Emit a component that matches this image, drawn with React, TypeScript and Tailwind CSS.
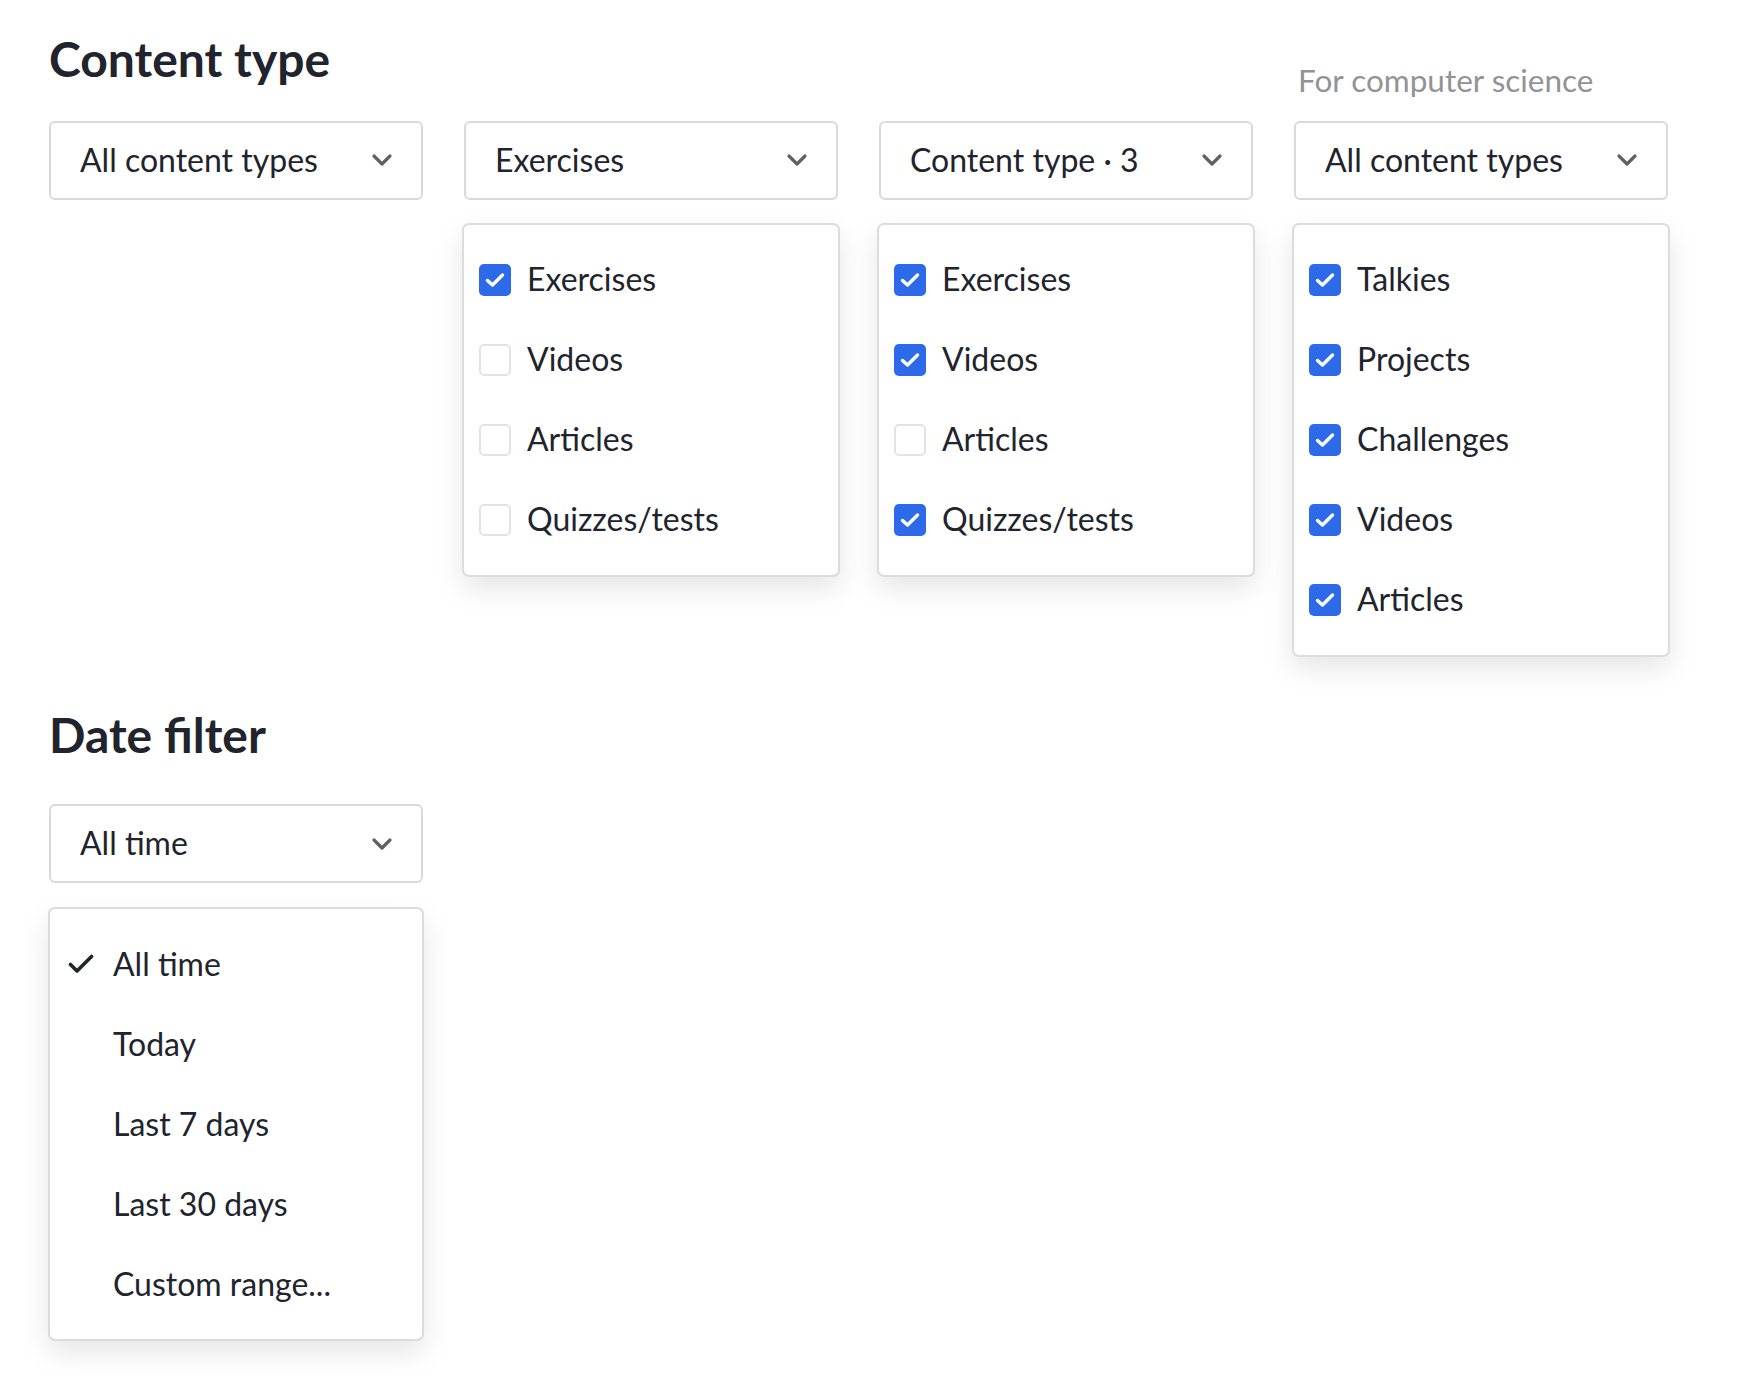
import { useState } from "react";

const FONT = { fontFamily: "Lato, 'Noto Sans', sans-serif" };

type Option = { label: string; checked: boolean };

function Chevron() {
  return (
    <svg width="22" height="14" viewBox="0 0 22 14" fill="none">
      <path
        d="M3 3 L11 11 L19 3"
        stroke="#5f6166"
        strokeWidth="3.2"
        strokeLinecap="round"
        strokeLinejoin="round"
      />
    </svg>
  );
}

function Select({ value }: { value: string }) {
  return (
    <button
      type="button"
      className="flex h-[79px] w-full items-center justify-between rounded-[6px] border-2 border-[#d9d9db] bg-white pl-[29px] pr-[28px] text-left text-[32px] leading-[1.2] text-[#21242c]"
    >
      <span>{value}</span>
      <Chevron />
    </button>
  );
}

function Checkbox({ checked }: { checked: boolean }) {
  if (!checked) {
    return (
      <span className="block h-8 w-8 shrink-0 rounded-[5px] border-2 border-[#e3e3e5] bg-white" />
    );
  }
  return (
    <span className="grid h-8 w-8 shrink-0 place-items-center rounded-[5px] bg-[#2d6ae9]">
      <svg width="22" height="18" viewBox="0 0 22 18" fill="none">
        <path
          d="M3.5 9.5 L8.5 14 L18.5 4"
          stroke="white"
          strokeWidth="3.4"
          strokeLinecap="round"
          strokeLinejoin="round"
        />
      </svg>
    </span>
  );
}

function CheckPanel({ options }: { options: Option[] }) {
  const [items, setItems] = useState(options);
  return (
    <div className="-mx-[2px] mt-[23px] rounded-[7px] border-2 border-[#dcdcde] bg-white px-[15px] py-[15px] shadow-[0_12px_28px_rgba(0,0,0,0.10)]">
      {items.map((o, i) => (
        <label
          key={o.label}
          className="flex h-20 cursor-pointer items-center gap-4 text-[32px] leading-[1.2] text-[#21242c]"
          onClick={() =>
            setItems((prev) =>
              prev.map((p, j) => (j === i ? { ...p, checked: !p.checked } : p))
            )
          }
        >
          <Checkbox checked={o.checked} />
          <span>{o.label}</span>
        </label>
      ))}
    </div>
  );
}

function DatePanel() {
  const options = ["All time", "Today", "Last 7 days", "Last 30 days", "Custom range..."];
  const [selected, setSelected] = useState("All time");
  return (
    <div className="-mx-[1px] mt-[24px] rounded-[7px] border-2 border-[#dcdcde] bg-white py-[15px] pl-[18px] shadow-[0_12px_28px_rgba(0,0,0,0.10)]">
      {options.map((o) => (
        <div
          key={o}
          onClick={() => setSelected(o)}
          className="flex h-20 cursor-pointer items-center text-[32px] leading-[1.2] text-[#21242c]"
        >
          <span className="flex w-[45px] shrink-0 items-center">
            {selected === o && (
              <svg width="26" height="22" viewBox="0 0 26 22" fill="none">
                <path
                  d="M2.5 11.5 L9 18 L23.5 3.5"
                  stroke="#21242c"
                  strokeWidth="3.6"
                  strokeLinecap="round"
                  strokeLinejoin="round"
                />
              </svg>
            )}
          </span>
          <span>{o}</span>
        </div>
      ))}
    </div>
  );
}

export default function App() {
  return (
    <div className="min-h-screen bg-white pl-[49px] pt-[30px]" style={FONT}>
      <div className="grid grid-cols-[374px_374px_374px_374px] gap-x-[41px]">
        {/* header row */}
        <h1 className="col-span-3 mb-[12px] self-end text-[48px] font-bold leading-[1.2] text-[#21242c]">
          Content type
        </h1>
        <p className="self-end pl-[4px] text-[31.5px] leading-[1.2] text-[#929396]">
          For computer science
        </p>

        {/* selects */}
        <div className="mt-[21px]">
          <Select value="All content types" />
        </div>
        <div className="mt-[21px]">
          <Select value="Exercises" />
          <CheckPanel
            options={[
              { label: "Exercises", checked: true },
              { label: "Videos", checked: false },
              { label: "Articles", checked: false },
              { label: "Quizzes/tests", checked: false },
            ]}
          />
        </div>
        <div className="mt-[21px]">
          <Select value="Content type · 3" />
          <CheckPanel
            options={[
              { label: "Exercises", checked: true },
              { label: "Videos", checked: true },
              { label: "Articles", checked: false },
              { label: "Quizzes/tests", checked: true },
            ]}
          />
        </div>
        <div className="mt-[21px]">
          <Select value="All content types" />
          <CheckPanel
            options={[
              { label: "Talkies", checked: true },
              { label: "Projects", checked: true },
              { label: "Challenges", checked: true },
              { label: "Videos", checked: true },
              { label: "Articles", checked: true },
            ]}
          />
        </div>
      </div>

      <div className="mt-[49px] w-[374px]">
        <h2 className="text-[48px] font-bold leading-[1.2] text-[#21242c]">Date filter</h2>
        <div className="mt-[41px]">
          <Select value="All time" />
        </div>
        <DatePanel />
      </div>
    </div>
  );
}
